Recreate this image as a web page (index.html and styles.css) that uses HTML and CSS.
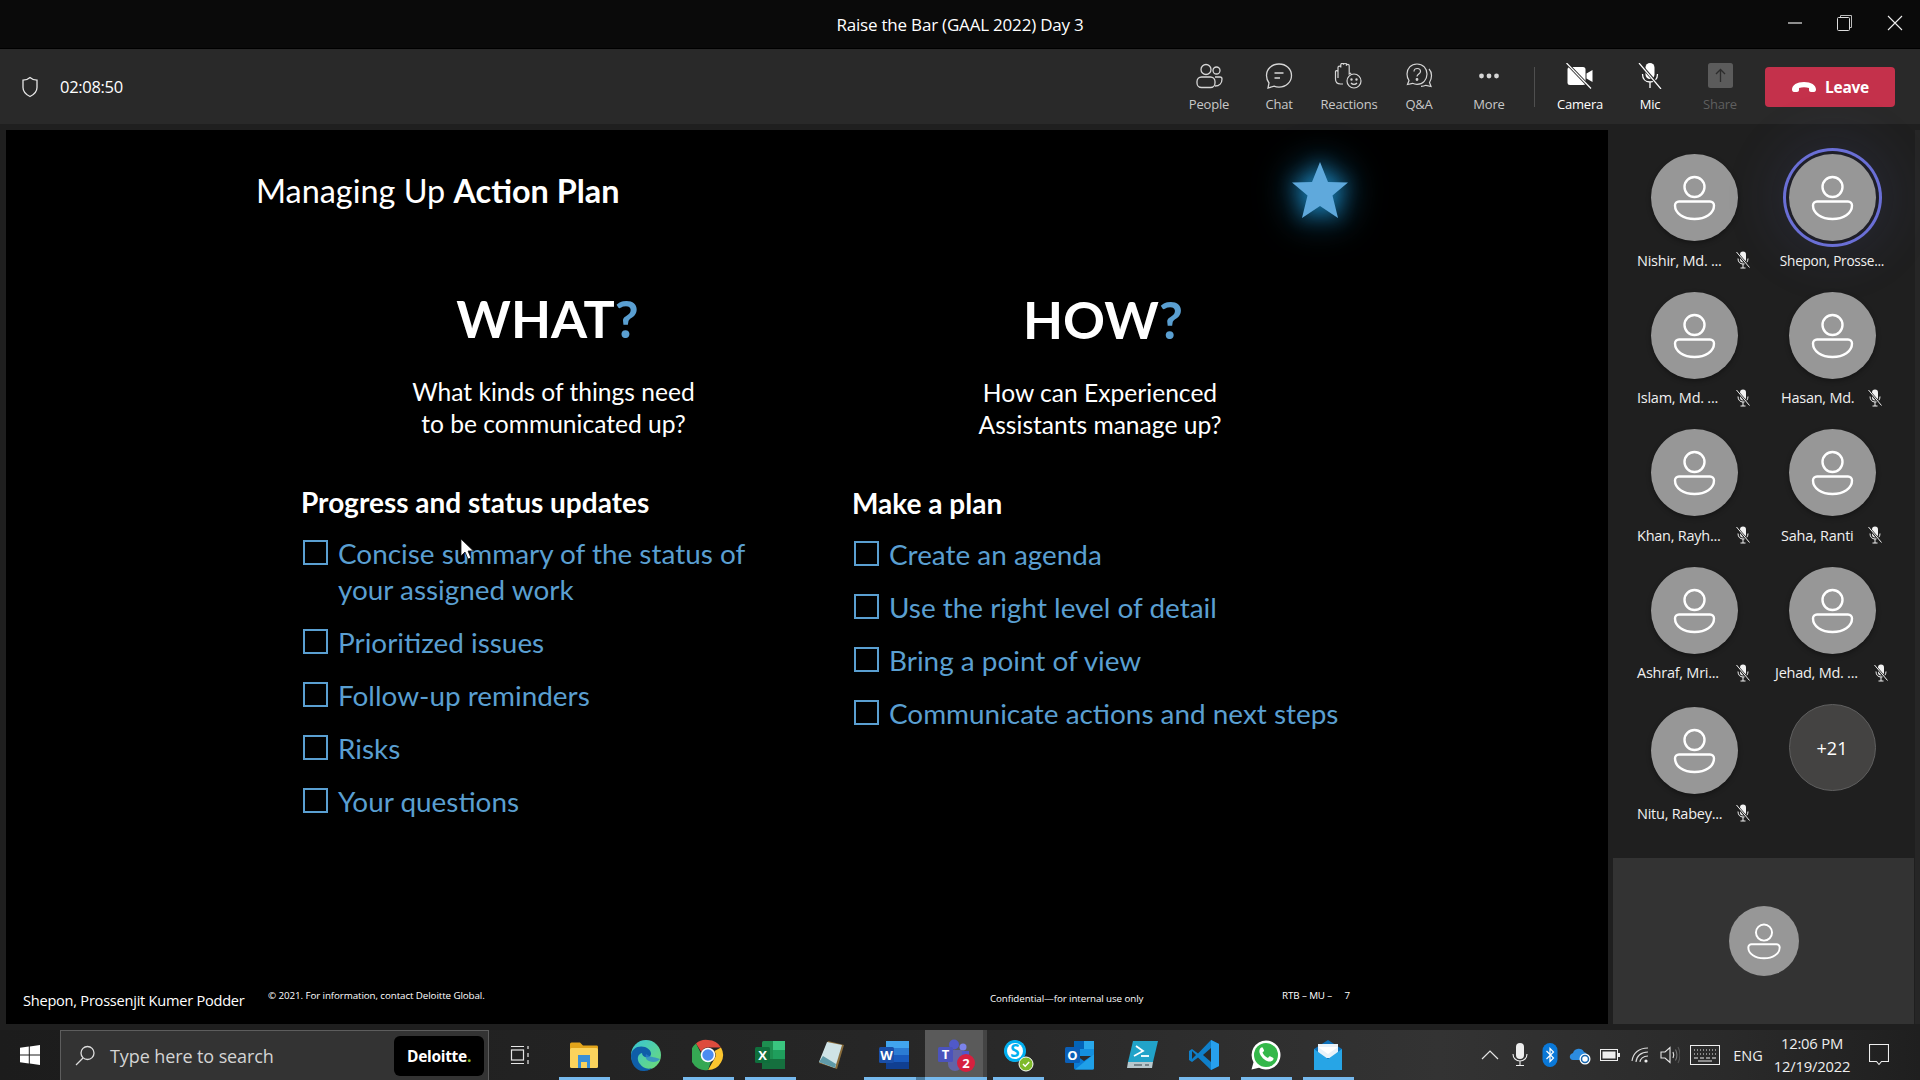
FILE: index.html
```html
<!DOCTYPE html>
<html lang="en">
<head>
    <meta charset="UTF-8">
    <meta name="viewport" content="width=device-width, initial-scale=1.0">
    <title>Raise the Bar (GAAL 2022) Day 3</title>
    <link rel="stylesheet" href="styles.css">
</head>
<body>
    <svg class="defs" width="0" height="0" aria-hidden="true">
        <symbol id="person" viewBox="0 0 87 87">
            <circle cx="43.5" cy="33" r="10" fill="none" stroke="#fff" stroke-width="2.4"/>
            <path d="M28 47.5H59a4 4 0 0 1 4 4C63 59.500 54.500 65 43.500 65S24 59.500 24 51.500a4 4 0 0 1 4-4z" fill="none" stroke="#fff" stroke-width="2.4"/>
        </symbol>
        <symbol id="mic-off" viewBox="0 0 16 18">
            <rect x="5" y="0.500" width="6" height="11" rx="3" fill="#f2f2f2"/>
            <path d="M3 7.500c0 3.500 2 5.500 5 5.500s5-2 5-5.500M8 13v4M5.500 17h5" fill="none" stroke="#f2f2f2" stroke-width="1"/>
            <path d="M1.500 1.500l13 15" stroke="#1f1f1f" stroke-width="2.500"/>
            <path d="M1.500 1l13 15.500" stroke="#f2f2f2" stroke-width="1"/>
        </symbol>
    </svg>

    <div class="titlebar">
        <span class="window-title">Raise the Bar (GAAL 2022) Day 3</span>
        <div class="window-controls">
            <svg width="16" height="16" viewBox="0 0 16 16"><path d="M1 8h14" stroke="#e6e6e6" stroke-width="1.200"/></svg>
            <svg width="18" height="18" viewBox="0 0 18 18"><path d="M4.500 3.500V1.500H15.500V13.500H13.500" fill="none" stroke="#bbb"/><rect x="1.500" y="3.500" width="12" height="13" rx="1" fill="none" stroke="#ddd"/></svg>
            <svg width="16" height="16" viewBox="0 0 16 16"><path d="M1 1l14 14M15 1L1 15" stroke="#eee" stroke-width="1.100"/></svg>
        </div>
    </div>

    <div class="toolbar">
        <svg class="shield" width="20" height="22" viewBox="0 0 20 22"><path d="M10 1.500c2 1.800 4.500 2.700 7 2.700v7.300c0 4-3 7-7 9-4-2-7-5-7-9V4.200c2.500 0 5-.9 7-2.700z" fill="none" stroke="#e6e6e6" stroke-width="1.300"/></svg>
        <span class="meeting-time">02:08:50</span>
        <div class="actions">
            <div class="action">
                <svg width="30" height="26" viewBox="0 0 30 26" fill="none" stroke="#d6d6d6" stroke-width="1.300"><circle cx="12" cy="6.500" r="5"/><circle cx="22.500" cy="7.500" r="3.500"/><rect x="3" y="14" width="18" height="10.500" rx="4.500"/><path d="M21 14h5c1.500 0 2 .8 2 2 0 4-2.500 7-7 7"/></svg>
                <span>People</span>
            </div>
            <div class="action">
                <svg width="30" height="26" viewBox="0 0 30 26" fill="none" stroke="#d6d6d6" stroke-width="1.300"><path d="M15 1C8 1 2.500 6 2.500 12.500c0 3 1 5.500 2.500 7.500l-1 5 6-1.800c1.500.6 3.200.9 5 .9 7 0 12.500-5 12.500-11.600S22 1 15 1z"/><path d="M10.500 10h9M10.500 15h5.500" stroke-width="1.500"/></svg>
                <span>Chat</span>
            </div>
            <div class="action">
                <svg width="30" height="26" viewBox="0 0 30 26" fill="none" stroke="#d6d6d6" stroke-width="1.200"><path d="M4 15V4.500a1.400 1.400 0 0 1 2.800 0V1.800a1.400 1.400 0 0 1 2.800 0v-.3a1.400 1.400 0 0 1 2.800 0v1.300a1.400 1.400 0 0 1 2.800 0V11l2 -1M4 8.500a1.300 1.300 0 0 0-2.500 0V16c0 3 2 5 5 5h2.500"/><circle cx="20" cy="18" r="7"/><circle cx="17.500" cy="16.500" r=".6" fill="#d6d6d6"/><circle cx="22.500" cy="16.500" r=".6" fill="#d6d6d6"/><path d="M17 20c1.500 1.800 4.500 1.800 6 0"/></svg>
                <span>Reactions</span>
            </div>
            <div class="action">
                <svg width="30" height="26" viewBox="0 0 30 26" fill="none" stroke="#d6d6d6" stroke-width="1.200"><path d="M13 1C7 1 3 5.500 3 11c0 2.500.8 4.700 2 6.500l-1.500 4 5-1.200C10 21 11.500 21.300 13 21.300c6 0 10-4.600 10-10.200S19 1 13 1z"/><path d="M10 8.500c0-4 6.500-4 6.500 0 0 2.500-3.500 2.500-3.500 5"/><circle cx="13" cy="16.500" r=".8" fill="#d6d6d6"/><path d="M25 6c2 2 2.500 4 2.500 6.500 0 2.500-.7 5-2 7l1.500 4-5-1.200c-1.500.7-3 1-5 1"/></svg>
                <span>Q&amp;A</span>
            </div>
            <div class="action">
                <svg width="30" height="26" viewBox="0 0 30 26" fill="#d6d6d6"><circle cx="7.500" cy="13" r="2.400"/><circle cx="15" cy="13" r="2.400"/><circle cx="22.500" cy="13" r="2.400"/></svg>
                <span>More</span>
            </div>
            <div class="divider"></div>
            <div class="action action-on">
                <svg width="30" height="26" viewBox="0 0 30 26"><rect x="2.500" y="4" width="18" height="18" rx="2.500" fill="#fff"/><path d="M21.500 10.500l6-3.500v12l-6-3.500z" fill="#fff"/><path d="M2 .500L26 25.500" stroke="#292929" stroke-width="3"/><path d="M1.500 0L26 25.500" stroke="#fff" stroke-width="1.200"/></svg>
                <span>Camera</span>
            </div>
            <div class="action action-on">
                <svg width="30" height="26" viewBox="0 0 30 26"><rect x="10.500" y="0" width="9" height="16" rx="4.500" fill="#fff"/><path d="M7.500 11c0 5 3 8 7.500 8s7.500-3 7.500-8M15 19v6" fill="none" stroke="#fff" stroke-width="1.300"/><path d="M4.500 .500L26 25.500" stroke="#292929" stroke-width="3"/><path d="M4 0L26 26" stroke="#fff" stroke-width="1.200"/></svg>
                <span>Mic</span>
            </div>
            <div class="action action-off">
                <svg width="30" height="26" viewBox="0 0 30 26"><rect x="3" y="0" width="25" height="25" rx="2.500" fill="#5b5b5b"/><path d="M15.500 19V6.500M11 11l4.500-4.500 4.500 4.500" fill="none" stroke="#2c2c2c" stroke-width="1.300"/></svg>
                <span>Share</span>
            </div>
            <button class="leave">
                <svg width="26" height="12" viewBox="0 0 26 12"><path d="M1 8.500C1 4 6 1 13 1s12 3 12 7.500c0 1.500-.8 2.500-2 2.500h-3c-1.200 0-2-.8-2-2V7c-1.500-.5-3.200-.7-5-.7S9.500 6.500 8 7v2c0 1.200-.8 2-2 2H3c-1.200 0-2-1-2-2.500z" fill="#fff"/></svg>
                <span>Leave</span>
            </button>
        </div>
    </div>

    <div class="main">
        <div class="slide">
            <h2 class="slide-title">Managing Up <b>Action Plan</b></h2>
            <svg class="star" width="56" height="56" viewBox="0 0 56 56"><path d="M28 0l8 20 20 .500-15.500 13L46 56 28 44 10 56l5.500-22.500L0 20.500 20 20z" fill="#5fa9dc"/></svg>

            <div class="plan">
                <div class="plan-col">
                    <div class="col-head">
                        <div class="big-word">WHAT<span class="qm">?</span></div>
                        <p class="sub-text">What kinds of things need<br>to be communicated up?</p>
                    </div>
                    <h3 class="col-title">Progress and status updates</h3>
                    <ul class="checks">
                        <li>Concise summary of the status of your assigned work</li>
                        <li>Prioritized issues</li>
                        <li>Follow-up reminders</li>
                        <li>Risks</li>
                        <li>Your questions</li>
                    </ul>
                </div>
                <div class="plan-col plan-col-right">
                    <div class="col-head">
                        <div class="big-word">HOW<span class="qm">?</span></div>
                        <p class="sub-text">How can Experienced<br>Assistants manage up?</p>
                    </div>
                    <h3 class="col-title">Make a plan</h3>
                    <ul class="checks">
                        <li>Create an agenda</li>
                        <li>Use the right level of detail</li>
                        <li>Bring a point of view</li>
                        <li>Communicate actions and next steps</li>
                    </ul>
                </div>
            </div>

            <div class="slide-foot">
                <span class="presenter">Shepon, Prossenjit Kumer Podder</span>
                <span class="fine fine-copy">© 2021. For information, contact Deloitte Global.</span>
                <span class="fine fine-conf">Confidential—for internal use only</span>
                <span class="fine">RTB – MU –&nbsp;&nbsp;&nbsp;&nbsp; 7</span>
            </div>

            <svg class="cursor" width="14" height="22" viewBox="0 0 14 22"><path d="M1 1v17l4-4 3 7 3-1-3-7h5.500z" fill="#fff" stroke="#111" stroke-width=".8"/></svg>
        </div>

        <div class="panel">
            <div class="tiles">
                <div class="tile">
                    <div class="avatar"><svg><use href="#person"/></svg></div>
                    <div class="tile-name"><span class="name">Nishir, Md. ...</span><svg class="mute"><use href="#mic-off"/></svg></div>
                </div>
                <div class="tile">
                    <div class="avatar avatar-speaking"><svg><use href="#person"/></svg></div>
                    <div class="tile-name"><span class="name name-full">Shepon, Prosse...</span></div>
                </div>
                <div class="tile">
                    <div class="avatar"><svg><use href="#person"/></svg></div>
                    <div class="tile-name"><span class="name">Islam, Md. ...</span><svg class="mute"><use href="#mic-off"/></svg></div>
                </div>
                <div class="tile">
                    <div class="avatar"><svg><use href="#person"/></svg></div>
                    <div class="tile-name"><span class="name name-short">Hasan, Md.</span><svg class="mute"><use href="#mic-off"/></svg></div>
                </div>
                <div class="tile">
                    <div class="avatar"><svg><use href="#person"/></svg></div>
                    <div class="tile-name"><span class="name">Khan, Rayh...</span><svg class="mute"><use href="#mic-off"/></svg></div>
                </div>
                <div class="tile">
                    <div class="avatar"><svg><use href="#person"/></svg></div>
                    <div class="tile-name"><span class="name name-short">Saha, Ranti</span><svg class="mute"><use href="#mic-off"/></svg></div>
                </div>
                <div class="tile">
                    <div class="avatar"><svg><use href="#person"/></svg></div>
                    <div class="tile-name"><span class="name">Ashraf, Mri...</span><svg class="mute"><use href="#mic-off"/></svg></div>
                </div>
                <div class="tile">
                    <div class="avatar"><svg><use href="#person"/></svg></div>
                    <div class="tile-name"><span class="name">Jehad, Md. ...</span><svg class="mute"><use href="#mic-off"/></svg></div>
                </div>
                <div class="tile tile-last">
                    <div class="avatar"><svg><use href="#person"/></svg></div>
                    <div class="tile-name"><span class="name">Nitu, Rabey...</span><svg class="mute"><use href="#mic-off"/></svg></div>
                </div>
                <div class="tile">
                    <div class="avatar avatar-more">+21</div>
                </div>
            </div>
            <div class="self-tile">
                <div class="avatar avatar-self"><svg><use href="#person"/></svg></div>
            </div>
        </div>
    </div>

    <div class="taskbar">
        <div class="start">
            <svg width="20" height="20" viewBox="0 0 20 20" fill="#fff"><path d="M0 2.800L8.800 1.600V9.500H0zM9.800 1.400L20 0V9.500H9.800zM0 10.500H8.800V18.400L0 17.200zM9.800 10.500H20V20L9.800 18.600z"/></svg>
        </div>
        <div class="search">
            <svg width="24" height="24" viewBox="0 0 24 24" fill="none" stroke="#ddd" stroke-width="1.300"><circle cx="14.500" cy="9" r="6.500"/><path d="M10 14L3 21"/></svg>
            <span class="search-text">Type here to search</span>
            <div class="deloitte">Deloitte<span class="dot">.</span></div>
        </div>
        <div class="task-btn task-view">
            <svg width="20" height="20" viewBox="0 0 20 20" fill="none" stroke="#e6e6e6" stroke-width="1.200"><path d="M1 1.500h13M1 18.500h13"/><rect x="1.500" y="5" width="12" height="10"/><path d="M18 1v3M18 8v4M18 15v4"/></svg>
        </div>
        <div class="task-btn running">
            <svg width="30" height="28" viewBox="0 0 30 28"><path d="M1 3a1.500 1.500 0 0 1 1.500-1.500H11l3 3h14A1.500 1.500 0 0 1 29 6v4H1z" fill="#e2a41a"/><rect x="1" y="7" width="28" height="20" rx="1.500" fill="#fbd35c"/><path d="M9 14h12v13h-3v-6h-6v6H9z" fill="#3a8fd6"/></svg>
        </div>
        <div class="task-btn">
            <svg width="32" height="32" viewBox="0 0 32 32"><defs><linearGradient id="edgeA" x1="0" y1="0" x2="1" y2="1"><stop offset="0" stop-color="#36c4d8"/><stop offset="1" stop-color="#6fdc72"/></linearGradient></defs><circle cx="16" cy="16" r="15" fill="url(#edgeA)"/><path d="M1 17C1 9 9 6 15 8c6 2 8 8 4 10-4 1-7-1-7-4-4 1-6 6-2 11 2 3 7 6 12 4 -3 3-7 3-9 3C6 32 1 25 1 17z" fill="#0f5ea8"/><path d="M30 20c-2 3-7 4-11 2-3-1-4-4-3-7 5 4 10 3 14 5z" fill="#2b7fd0" opacity=".7"/></svg>
        </div>
        <div class="task-btn running">
            <svg width="32" height="32" viewBox="0 0 32 32"><path d="M16 1a15 15 0 0 1 13 7.500H16a7.500 7.500 0 0 0-6.800 4.300L4 4.500A15 15 0 0 1 16 1z" fill="#de4b3d"/><path d="M29 8.500A15 15 0 0 1 16 31l6.500-11.200A7.500 7.500 0 0 0 22.500 12z" fill="#fbc52e"/><path d="M16 31A15 15 0 0 1 4 4.500l5.500 11A7.500 7.500 0 0 0 19 22.500z" fill="#35a853"/><circle cx="16" cy="16" r="6.500" fill="#4a8cf0" stroke="#fff" stroke-width="1.600"/></svg>
        </div>
        <div class="task-btn running">
            <svg width="32" height="32" viewBox="0 0 32 32"><rect x="8" y="2" width="23" height="28" rx="1.500" fill="#1d8f50"/><rect x="19" y="2" width="12" height="9" fill="#3ac57f"/><rect x="19" y="11" width="12" height="9" fill="#1f9e5c"/><rect x="8" y="20" width="23" height="10" fill="#156f3e"/><rect x="1" y="8" width="15" height="16" rx="1.500" fill="#0f6f3c"/><text x="8.500" y="21" class="tile-letter">X</text></svg>
        </div>
        <div class="task-btn">
            <svg width="30" height="32" viewBox="0 0 30 32"><path d="M11 2l16 4-7 24L2 24z" fill="#8a6d3c"/><path d="M10 3l15 3-7 23L2 23z" fill="#cfe3e6"/><path d="M2 23l16 6 1-4L6 17z" fill="#5f9aa8"/></svg>
        </div>
        <div class="task-btn running running-split">
            <svg width="32" height="32" viewBox="0 0 32 32"><rect x="8" y="2" width="23" height="28" rx="1.500" fill="#2b7cd3"/><rect x="8" y="2" width="23" height="7" fill="#41a5ee"/><rect x="8" y="16" width="23" height="7" fill="#185abd"/><rect x="8" y="23" width="23" height="7" fill="#103f91"/><rect x="1" y="8" width="15" height="16" rx="1.500" fill="#1a4fa8"/><text x="8.500" y="21" class="tile-letter">W</text></svg>
        </div>
        <div class="task-btn running task-active">
            <svg width="34" height="34" viewBox="0 0 34 34"><circle cx="17" cy="6.500" r="5" fill="#5059c9"/><circle cx="26" cy="9" r="3.500" fill="#7b83eb"/><path d="M11 12h14v14a7 7 0 0 1-14 0z" fill="#6264a7"/><path d="M25 13h7v9a5 5 0 0 1-7 3z" fill="#5059c9"/><rect x="1" y="9" width="15" height="15" rx="1.500" fill="#4b53bc"/><text x="8.500" y="21" class="tile-letter">T</text></svg>
            <span class="badge">2</span>
        </div>
        <div class="task-btn running">
            <svg width="34" height="34" viewBox="0 0 34 34"><circle cx="14" cy="13" r="10.500" fill="#fff"/><rect x="3" y="2" width="22" height="22" rx="11" fill="#00aff0"/><circle cx="14" cy="13" r="8" fill="#fff"/><text x="14" y="19" class="skype-s">S</text><circle cx="25" cy="26" r="7" fill="#7fba2a" stroke="#fff" stroke-width="1"/><path d="M22 26l2.200 2.200 4-4.200" fill="none" stroke="#fff" stroke-width="1.400"/></svg>
        </div>
        <div class="task-btn">
            <svg width="32" height="32" viewBox="0 0 32 32"><rect x="10" y="2" width="20" height="15" fill="#1490df"/><rect x="10" y="2" width="10" height="8" fill="#0364b8"/><rect x="20" y="2" width="10" height="8" fill="#28a8ea"/><path d="M10 15l10 7 10-7v14a1.500 1.500 0 0 1-1.500 1.500H11.500A1.500 1.500 0 0 1 10 29z" fill="#0a7cd6"/><path d="M30 15v14a1.500 1.500 0 0 1-1.500 1.500H11l19-15.500z" fill="#1fa0e8"/><rect x="1" y="8" width="15" height="16" rx="1.500" fill="#0a5fb8"/><text x="8.500" y="21" class="tile-letter">O</text></svg>
        </div>
        <div class="task-btn">
            <svg width="32" height="30" viewBox="0 0 32 30"><path d="M7 1h25l-5 21H2z" fill="#21a3c9"/><path d="M2 22h25l-1 6H1z" fill="#b7c7cc"/><path d="M10 6l7 5-9 5" fill="none" stroke="#fff" stroke-width="1.800"/><path d="M15 16h8" stroke="#fff" stroke-width="1.800"/><path d="M8 25h8M19 25h4" stroke="#5f6e73" stroke-width="1.500"/></svg>
        </div>
        <div class="task-btn running">
            <svg width="32" height="32" viewBox="0 0 32 32"><path d="M23 1l8 4v22l-8 4-13-12.500-6 4.500-3-2v-9l3-2 6 4.500z" fill="#0f7fc9"/><path d="M23 1l8 4v22l-8 4z" fill="#27a0ee"/><path d="M23 9v14l-8-7z" fill="#2a2a2a"/><path d="M4 12l4 4-4 4z" fill="#2a2a2a"/></svg>
        </div>
        <div class="task-btn running">
            <svg width="32" height="32" viewBox="0 0 32 32"><path d="M16 1.500a14.500 14.500 0 1 1-7 27.200L1.500 30.500l2-7.300A14.500 14.500 0 0 1 16 1.500z" fill="#fff"/><circle cx="16" cy="16" r="12" fill="#34b84a"/><path d="M11.500 8.500c-1.500.6-2.500 2.500-2 5 1 4 5 8 9 9 2.500.5 4.500-.8 5-2.500.2-.8-.2-1.200-1-1.600l-2-1c-.8-.4-1.300-.2-1.800.5l-.7 1c-2.500-1-4.500-3-5.500-5.500l1-.8c.6-.5.7-1 .3-1.800l-1-2c-.3-.8-1-.7-1.300-.3z" fill="#fff"/></svg>
        </div>
        <div class="task-btn running">
            <svg width="32" height="30" viewBox="0 0 32 30"><path d="M2 9L16 0l14 9v20H2z" fill="#0d6fb8"/><path d="M6 4h20v14H6z" fill="#e9f2f9"/><path d="M2 9l14 10L30 9v21H2z" fill="#27a5e6"/><path d="M6 7l10 7 10-7" fill="#fff"/></svg>
        </div>

        <div class="tray">
            <div class="tray-item"><svg width="18" height="10" viewBox="0 0 18 10"><path d="M1 9l8-8 8 8" fill="none" stroke="#e6e6e6" stroke-width="1.200"/></svg></div>
            <div class="tray-item"><svg width="16" height="24" viewBox="0 0 16 24"><rect x="4" y="0" width="8" height="16" rx="4" fill="#eee"/><path d="M1 11c0 4 3 7 7 7s7-3 7-7M8 18v4M4 22.500h8" fill="none" stroke="#eee" stroke-width="1.100"/></svg></div>
            <div class="tray-item"><svg width="16" height="24" viewBox="0 0 16 24"><rect x="0.500" y="0" width="15" height="24" rx="7.500" fill="#0a78d8"/><path d="M4.500 8l7 7-3.500 3.500v-13l3.500 3.500-7 7" fill="none" stroke="#fff" stroke-width="1.200"/></svg></div>
            <div class="tray-item"><svg width="22" height="20" viewBox="0 0 22 20"><path d="M1 13a4 4 0 0 1 3-5 6 6 0 0 1 11-1 4 4 0 0 1 2 7l-1 1H4a3 3 0 0 1-3-2z" fill="#2c8ce0"/><circle cx="16" cy="14" r="5.500" fill="#fff"/><circle cx="16" cy="14" r="3.500" fill="none" stroke="#1766ad" stroke-width="1.500"/></svg></div>
            <div class="tray-item"><svg width="20" height="12" viewBox="0 0 20 12"><rect x=".5" y=".5" width="17" height="11" fill="none" stroke="#eee"/><rect x="2.500" y="2.500" width="13" height="7" fill="#eee"/><rect x="18" y="4" width="2" height="4" fill="#eee"/></svg></div>
            <div class="tray-item"><svg width="18" height="16" viewBox="0 0 18 16" fill="none" stroke="#ddd" stroke-width="1.100"><path d="M1 14C2 6 8 1 17 1M5 15C5.500 9 10 5 17 5M9 15c.2-3 3-6 8-6" stroke-dasharray="none"/><circle cx="15" cy="14" r="1.600" fill="#eee" stroke="none"/></svg></div>
            <div class="tray-item"><svg width="20" height="20" viewBox="0 0 20 20" fill="none" stroke="#e6e6e6" stroke-width="1.100"><path d="M1 7h4l5-4.500v15L5 13H1zM13 7c1 2 1 4 0 6"/><path d="M15.500 4.500c1.800 3.500 1.800 7.500 0 11" stroke="#777"/><path d="M18 2c2.500 5 2.500 11 0 16" stroke="#555"/></svg></div>
            <div class="tray-item tray-keyboard"><svg width="30" height="20" viewBox="0 0 30 20" fill="none" stroke="#eee"><rect x=".5" y=".5" width="29" height="19"/><path d="M4 5h22M4 9h22" stroke-dasharray="1 2"/><path d="M4 13h22" stroke-dasharray="4 2"/><path d="M8 16h14"/></svg></div>
            <div class="tray-lang">ENG</div>
            <div class="tray-clock"><div>12:06 PM</div><div>12/19/2022</div></div>
            <div class="tray-item tray-note"><svg width="20" height="22" viewBox="0 0 20 22"><path d="M.500.500h19v17H12.500L10 20.500l-2.500-3H.500z" fill="none" stroke="#eee" stroke-width="1.100"/></svg></div>
        </div>
    </div>
</body>
</html>
```

FILE: styles.css
```css
* {
    box-sizing: border-box;
}
html, body {
    height: 100%;
}
body {
    margin: 0;
    display: flex;
    flex-direction: column;
    height: 1080px;
    overflow: hidden;
    background: #000;
    color: #fff;
    font-family: 'Open Sans', 'Noto Sans', sans-serif;
}
.defs {
    position: absolute;
}
svg {
    display: block;
}

/* window title */
.titlebar {
    position: relative;
    flex: 0 0 49px;
    display: flex;
    align-items: center;
    justify-content: center;
    background: #0a0a0a;
    border-bottom: 1px solid #000;
}
.window-title {
    font-size: 17px;
    letter-spacing: -0.2px;
}
.window-controls {
    position: absolute;
    right: 17px;
    top: 14px;
    display: flex;
    align-items: center;
    gap: 33px;
}

/* meeting toolbar */
.toolbar {
    flex: 0 0 75px;
    display: flex;
    align-items: center;
    padding-left: 20px;
    background: #292929;
}
.shield {
    margin-right: 20px;
}
.meeting-time {
    font-size: 16.5px;
    letter-spacing: -0.3px;
}
.actions {
    margin-left: auto;
    display: flex;
    align-items: center;
    padding-right: 25px;
}
.action {
    width: 70px;
    display: flex;
    flex-direction: column;
    align-items: center;
    gap: 6px;
    padding-top: 1px;
    font-size: 13px;
    letter-spacing: -0.2px;
    color: #c8c8c8;
}
.action svg {
    margin-top: 2px;
}
.action-on {
    color: #fff;
    font-weight: 500;
}
.action-off {
    color: #5f5f5f;
}
.divider {
    width: 1px;
    height: 40px;
    margin: 0 10px;
    background: #4f4f4f;
}
.leave {
    width: 130px;
    height: 40px;
    margin-left: 10px;
    display: flex;
    align-items: center;
    justify-content: center;
    gap: 8px;
    border: none;
    border-radius: 4px;
    background: #c4314b;
    color: #fff;
    font-family: inherit;
    font-size: 15.5px;
    font-weight: 700;
    letter-spacing: -0.3px;
}

/* slide + participants */
.main {
    flex: 1;
    display: flex;
    min-height: 0;
    padding-top: 6px;
    padding-bottom: 6px;
    background: #1f1f1f;
}
.slide {
    position: relative;
    flex: 0 0 1602px;
    margin-left: 6px;
    display: flex;
    flex-direction: column;
    background: #000;
    font-family: 'Lato', 'Open Sans', sans-serif;
}
.slide-title {
    margin: 42px 0 0 250px;
    font-size: 32.4px;
    line-height: 38px;
    font-weight: 400;
}
.star {
    position: absolute;
    left: 1286px;
    top: 32px;
    filter: drop-shadow(0 0 10px #1c86c0) drop-shadow(0 0 18px #12709f);
}
.plan {
    display: flex;
    padding: 0 0 0 295px;
    margin-top: 75px;
}
.plan-col {
    flex: 0 0 551px;
}
.plan-col-right {
    padding-top: 1px;
}
.col-head {
    width: 500px;
    text-align: center;
}
.big-word {
    font-size: 52px;
    line-height: 66px;
    font-weight: 700;
    padding-right: 12px;
}
.plan-col-right .big-word {
    padding-right: 0;
    padding-left: 6px;
}
.qm {
    color: #5a9fd1;
}
.sub-text {
    margin: 25px 0 0;
    font-size: 24.6px;
    line-height: 32px;
}
.plan-col:first-child .col-head {
    padding-left: 5px;
}
.plan-col-right .col-head {
    padding-right: 4px;
}
.col-title {
    margin: 46px 0 0;
    font-size: 28px;
    line-height: 32px;
    font-weight: 700;
}
.checks {
    margin: 17px 0 0;
    padding: 0;
    list-style: none;
    color: #5a9fd1;
    font-size: 27.9px;
    line-height: 36px;
}
.checks li {
    position: relative;
    width: 445px;
    padding-left: 37px;
    margin-bottom: 17px;
}
.plan-col-right .checks li {
    width: 500px;
}
.checks li::before {
    content: "";
    position: absolute;
    left: 2px;
    top: 5px;
    width: 21px;
    height: 21px;
    border: 2px solid #5a9fd1;
}
.slide-foot {
    margin-top: auto;
    display: flex;
    align-items: flex-start;
    padding: 0 0 14px 17px;
    font-family: 'Open Sans', sans-serif;
}
.presenter {
    width: 245px;
    font-size: 14.6px;
    line-height: 20px;
    letter-spacing: -0.25px;
    padding-top: 1px;
}
.fine {
    font-size: 9.8px;
    line-height: 14px;
    letter-spacing: -0.1px;
}
.fine-copy {
    width: 722px;
}
.fine-conf {
    width: 292px;
    padding-top: 3px;
}
.cursor {
    position: absolute;
    left: 454px;
    top: 408px;
}

/* right side panel */
.panel {
    flex: 1;
    display: flex;
    flex-direction: column;
    border-right: 5px solid #262626;
}
.tiles {
    display: grid;
    grid-template-columns: 138px 138px;
    grid-auto-rows: 137.5px;
    padding: 24px 0 0 17px;
}
.tile {
    display: flex;
    flex-direction: column;
    align-items: center;
}
.tile-last {
    margin-top: 3px;
}
.avatar {
    flex: 0 0 87px;
    width: 87px;
    height: 87px;
    border-radius: 50%;
    background: #979797;
    box-shadow: 0 2px 5px rgba(0, 0, 0, 0.35);
}
.avatar svg {
    width: 100%;
    height: 100%;
}
.avatar-speaking {
    box-shadow: 0 0 0 3px #1f1f28, 0 0 0 6px #6a6fd6, 0 0 45px 22px rgba(80, 85, 150, 0.13);
}
.avatar-more {
    display: flex;
    align-items: center;
    justify-content: center;
    background: #444342;
    border: 1px solid #5f5f5f;
    box-shadow: none;
    font-size: 18px;
}
.tile-name {
    display: flex;
    align-items: center;
    gap: 6px;
    height: 20px;
    margin-top: 9px;
    font-size: 14.5px;
    letter-spacing: -0.25px;
    color: #f0f0f0;
}
.name {
    width: 92px;
    white-space: nowrap;
}
.name-short {
    width: 80px;
}
.name-full {
    width: auto;
    font-size: 13.6px;
}
.mute {
    width: 16px;
    height: 18px;
}
.self-tile {
    margin: auto 1px 0 5px;
    height: 166px;
    display: flex;
    align-items: center;
    justify-content: center;
    background: #333;
}
.avatar-self {
    flex-basis: 70px;
    width: 70px;
    height: 70px;
    box-shadow: none;
}

/* windows taskbar */
.taskbar {
    flex: 0 0 50px;
    display: flex;
    align-items: stretch;
    background: linear-gradient(90deg, #1c1c1c 0%, #262626 45%, #333 75%, #2a2a2a 90%, #1f1f1f 100%);
}
.start {
    flex: 0 0 60px;
    display: flex;
    align-items: center;
    justify-content: center;
}
.search {
    flex: 0 0 429px;
    display: flex;
    align-items: center;
    padding: 0 4px 0 12px;
    background: #333;
    border: 1px solid #5d5d5d;
    border-bottom: none;
}
.search-text {
    margin-left: 13px;
    font-size: 18px;
    letter-spacing: -0.1px;
    color: #d4d4d4;
}
.deloitte {
    margin-left: auto;
    width: 90px;
    height: 40px;
    display: flex;
    align-items: center;
    justify-content: center;
    border-radius: 6px;
    background: #000;
    font-size: 15.5px;
    font-weight: 700;
    letter-spacing: -0.3px;
}
.dot {
    color: #86bc25;
}
.task-btn {
    position: relative;
    flex: 0 0 62px;
    display: flex;
    align-items: center;
    justify-content: center;
}
.task-view {
    flex-basis: 64px;
    padding-right: 2px;
}
.task-btn.running::after {
    content: "";
    position: absolute;
    left: 6px;
    right: 5px;
    bottom: 0;
    height: 3px;
    background: #76b9ed;
}
.task-btn.running-split::after {
    left: 1px;
    right: -6px;
    background: linear-gradient(90deg, #76b9ed 78%, #4b7c9f 78%);
}
.task-active {
    background: #5a5a5a;
    border-right: 4px solid #444;
}
.task-btn.task-active::after {
    left: 0;
    right: -4px;
}
.badge {
    position: absolute;
    left: 32px;
    top: 24px;
    width: 18px;
    height: 18px;
    border-radius: 50%;
    background: #d6203f;
    font-size: 13px;
    font-weight: 700;
    line-height: 18px;
    text-align: center;
}
.tile-letter {
    font-family: 'Open Sans', sans-serif;
    font-size: 13px;
    font-weight: 700;
    fill: #fff;
    text-anchor: middle;
}
.skype-s {
    font-family: 'Open Sans', sans-serif;
    font-size: 17px;
    font-weight: 700;
    fill: #00aff0;
    text-anchor: middle;
}
.tray {
    margin-left: auto;
    display: flex;
    align-items: center;
    padding-right: 15px;
}
.tray-item {
    width: 30px;
    display: flex;
    align-items: center;
    justify-content: center;
}
.tray-keyboard {
    width: 40px;
}
.tray-lang {
    width: 46px;
    text-align: center;
    font-size: 14.5px;
    color: #eee;
}
.tray-clock {
    width: 82px;
    text-align: center;
    font-size: 14.8px;
    line-height: 23px;
    color: #eee;
    letter-spacing: -0.2px;
}
.tray-note {
    width: 52px;
}
```
